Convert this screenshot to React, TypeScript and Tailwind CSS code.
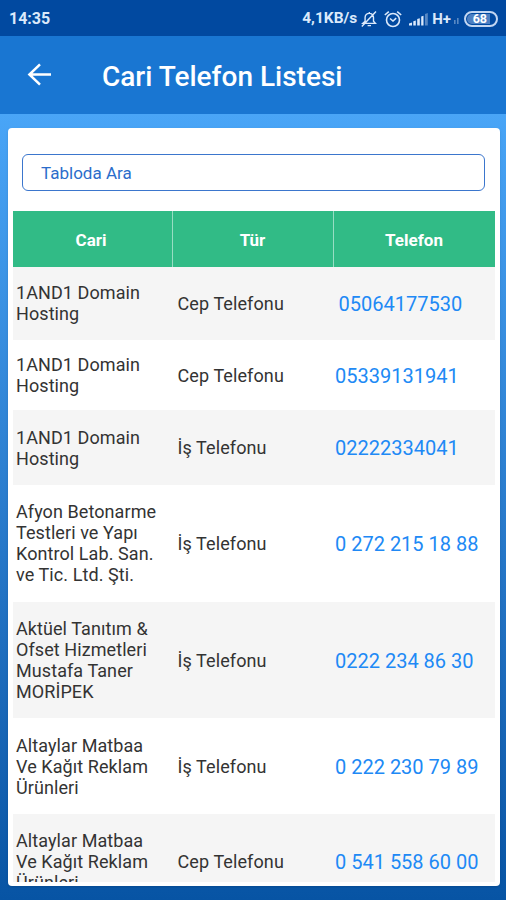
import React from 'react';
import { clsx } from 'clsx';

interface PhoneEntry {
  id: number;
  name: string[];
  type: string;
  phone: string;
  height: string;
}

const ENTRIES: PhoneEntry[] = [
  { id: 1, name: ['1AND1 Domain', 'Hosting'], type: 'Cep Telefonu', phone: '05064177530', height: 'h-[73px] pb-px' },
  { id: 2, name: ['1AND1 Domain', 'Hosting'], type: 'Cep Telefonu', phone: '05339131941', height: 'h-[70px]' },
  { id: 3, name: ['1AND1 Domain', 'Hosting'], type: 'İş Telefonu', phone: '02222334041', height: 'h-[75px]' },
  { id: 4, name: ['Afyon Betonarme', 'Testleri ve Yapı', 'Kontrol Lab. San.', 've Tic. Ltd. Şti.'], type: 'İş Telefonu', phone: '0 272 215 18 88', height: 'h-[117px] pb-px' },
  { id: 5, name: ['Aktüel Tanıtım &', 'Ofset Hizmetleri', 'Mustafa Taner', 'MORİPEK'], type: 'İş Telefonu', phone: '0222 234 86 30', height: 'h-[116px]' },
  { id: 6, name: ['Altaylar Matbaa', 'Ve Kağıt Reklam', 'Ürünleri'], type: 'İş Telefonu', phone: '0 222 230 79 89', height: 'h-[96px]' },
  { id: 7, name: ['Altaylar Matbaa', 'Ve Kağıt Reklam', 'Ürünleri'], type: 'Cep Telefonu', phone: '0 541 558 60 00', height: 'h-[96px] pb-px' },
];

const BellOffIcon = () => (
  <svg className="ml-[4px] h-[18px] w-[16px]" viewBox="0 0 16 18" fill="none" stroke="currentColor" strokeWidth="1.4">
    <path d="M1.8 13.4h12.6l-1.9-2.1V7.6c0-2.5-1.7-4.2-4.2-4.2S4.1 5.1 4.1 7.6v3.7zM8.3 3.4V2M6.6 15.6h3.4M.8 16.4 15 1.6" />
  </svg>
);

const AlarmIcon = () => (
  <svg className="ml-[7px] h-[18px] w-[18px]" viewBox="0 0 18 18" fill="none" stroke="currentColor" strokeWidth="1.6">
    <circle cx="9" cy="10" r="6.5" />
    <path d="M.8 5 4.8 1.6M17.2 5l-4-3.4M6 8.5 9 11l3.2-2.8" />
  </svg>
);

const SignalIcon = () => (
  <svg className="ml-[7px] h-[14px] w-[20px]" viewBox="0 0 20 14" fill="currentColor">
    <path d="M0 13.5v-2l3-1v3zM4.3 13.5V9.3l2.5-.8v5zM8.2 13.5V7l2.6-.8v7.3zM12.2 13.5V4.5l2.3-.8v9.8z" />
    <path opacity=".4" d="M16 13.5V2l2.8-1v12.5z" />
  </svg>
);

const StatusBar = () => (
  <div className="flex h-9 shrink-0 items-center bg-[#0149a0] pl-[9px] pr-[8px] pt-[2px] text-[16px] font-bold text-[#dbe9fb]">
    <span>14:35</span>
    <span className="ml-auto text-[15.5px]">4,1KB/s</span>
    <BellOffIcon />
    <AlarmIcon />
    <SignalIcon />
    <span className="ml-[3px] text-[15px]">H+</span>
    <svg className="mt-[4px] ml-[3px] h-[6px] w-[5px] opacity-40" viewBox="0 0 5 6" fill="currentColor">
      <path d="M0 2h1.6v4H0zM3 0h1.6v6H3z" />
    </svg>
    <div className="ml-[5px] flex h-[16px] w-[34px] items-center rounded-full border-2 border-[#c2d6f2] p-px">
      <div className="flex h-full w-[23px] items-center justify-end rounded-l-full bg-[#4c7fc2] pr-[3px]">
        <span className="text-[12.5px] leading-none text-white">68</span>
      </div>
    </div>
  </div>
);

const Header = () => (
  <header className="flex h-[78px] shrink-0 items-center bg-[#1976d2] text-white">
    <svg className="ml-[27px] h-[24px] w-[25px]" viewBox="0 0 25 24" fill="none" stroke="currentColor" strokeWidth="2.5">
      <path d="M24 11.5H3M13 1.3 2.4 11.5 13 21.7" />
    </svg>
    <h1 className="ml-[50px] pt-[4px] text-[28px] leading-none font-medium">Cari Telefon Listesi</h1>
  </header>
);

const PhoneRow: React.FC<{ entry: PhoneEntry; striped: boolean; wide: boolean }> = ({ entry, striped, wide }) => (
  <div
    className={clsx(
      'grid shrink-0 grid-cols-[160px_161px_161px] items-center',
      entry.height,
      striped ? 'bg-[#f5f5f5]' : 'bg-white'
    )}
  >
    <div className="pl-[3.5px] text-[18px] leading-[21px] tracking-[0.08px] whitespace-nowrap text-[#333]">
      {entry.name.map((line, i) => (
        <div key={i}>{line}</div>
      ))}
    </div>
    <div className="pl-[5px] text-[18px] leading-[21px] tracking-[0.1px] text-[#333]">{entry.type}</div>
    <a className={clsx('pt-px text-[20px] leading-[22px] whitespace-nowrap text-[#2089f5]', wide ? 'pl-[5px]' : 'pl-[1.5px]')}>
      {entry.phone}
    </a>
  </div>
);

const App: React.FC = () => (
  <div className="flex h-[900px] w-[506px] flex-col overflow-hidden bg-[#0755a5] font-['Roboto',sans-serif]">
    <StatusBar />
    <Header />
    <main className="flex min-h-0 flex-1 flex-col bg-linear-to-b from-[#49a5f7] to-[#0754a4] pt-[14px] pr-[6.5px] pb-[14px] pl-[7.5px]">
      <div className="flex min-h-0 flex-1 flex-col rounded-[4px] bg-white pr-[4.5px] pb-[4px] pl-[5px] shadow-sm">
        {/* Search */}
        <div className="mt-[26px] mr-[10px] ml-[9px] flex h-[37px] shrink-0 items-center rounded-[6px] border border-[#3b76cd] pt-[2px] pl-[18.5px]">
          <span className="text-[17px] text-[#2b6dcb]">Tabloda Ara</span>
        </div>

        {/* Table */}
        <div className="mt-[20px] flex min-h-0 flex-1 flex-col overflow-hidden">
          <div className="grid h-[56px] shrink-0 grid-cols-[160px_161px_161px] items-stretch bg-[#31bb86] text-[17px] font-bold text-white">
            <div className="flex items-center justify-center border-r border-[#98ddc3] pt-[3px] pr-[2px]">Cari</div>
            <div className="flex items-center justify-center border-r border-[#98ddc3] pt-[3px]">Tür</div>
            <div className="flex items-center justify-center pt-[3px]">Telefon</div>
          </div>
          {ENTRIES.map((entry, i) => (
            <PhoneRow key={entry.id} entry={entry} striped={i % 2 === 0} wide={i === 0} />
          ))}
        </div>
      </div>
    </main>
  </div>
);

export default App;
